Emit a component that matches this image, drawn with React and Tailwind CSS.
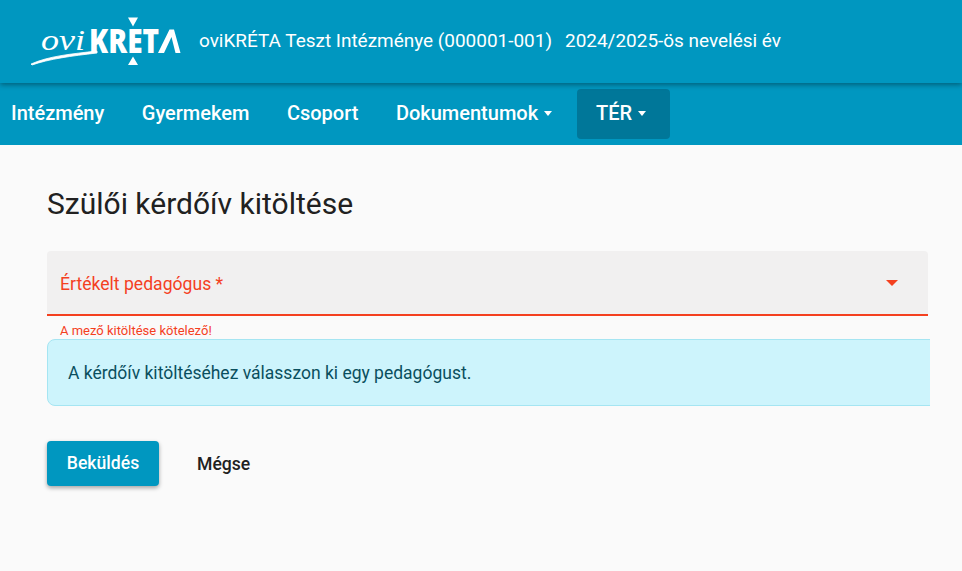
import React from 'react'

function Logo() {
  return (
    <svg width="152" height="54" viewBox="0 0 152 54" className="block">
      <text x="12" y="35" fontFamily="'Liberation Serif', serif" fontStyle="italic" fontSize="30" fill="white" textLength="44" lengthAdjust="spacingAndGlyphs">ovi</text>
      <path d="M2 49 C 20 41, 42 39, 68 36 L 68 38 C 42 41, 20 44, 3 50 Z" fill="white" stroke="white" strokeWidth="0.8" strokeLinejoin="round" />
      <text x="60" y="38" fontFamily="'Open Sans', sans-serif" fontWeight="800" fontSize="33" fill="white" textLength="70" lengthAdjust="spacingAndGlyphs">KRET</text>
      <path d="M129 38 L140.500 14.500 H145 L151.500 38 H146.500 L142.500 22 L135 38 Z" fill="white" />
      <path d="M99 2.500 H109 L104 11.500 Z M99 50 H109 L104 41.500 Z" fill="white" />
    </svg>
  )
}

function Caret() {
  return <span className="ml-[6px] inline-block w-0 h-0 border-x-[4.5px] border-x-transparent border-t-[5px] border-t-white" />
}

export default function App() {
  return (
    <div className="w-[962px] h-[571px] overflow-hidden bg-[#fafafa] font-['Roboto',sans-serif]">
      <header className="relative z-10 h-[83px] bg-[#0097c0] shadow-[0_2px_5px_rgba(0,0,0,0.35)] flex items-center pl-[29px] text-white">
        <Logo />
        <span className="ml-[18px] text-[18.97px]">oviKRÉTA Teszt Intézménye (000001-001)</span>
        <span className="ml-[13px] text-[18.97px]">2024/2025-ös nevelési év</span>
      </header>
      <nav className="h-[62px] bg-[#0097c0] flex items-center text-white text-[20px] font-medium">
        <a className="pl-[11px] mt-[-2px]">Intézmény</a>
        <a className="ml-[37.5px] mt-[-2px]">Gyermekem</a>
        <a className="ml-[37.5px] mt-[-2px]">Csoport</a>
        <a className="ml-[37.5px] mt-[-2px] flex items-center">Dokumentumok<Caret /></a>
        <a className="ml-[25px] w-[93px] h-[50px] rounded-[4px] bg-[#007799] flex items-center pl-[19px] pb-[2px]">TÉR<Caret /></a>
      </nav>
      <main className="pl-[47px] w-[930px] overflow-hidden">
        <h1 className="pt-[40px] text-[30px] leading-[37px] text-[#212121]">Szülői kérdőív kitöltése</h1>
        <div className="mt-[29px] w-[881px] h-[65px] bg-[#f1f0f0] rounded-t-[4px] border-b-2 border-[#f4401f] flex items-center justify-between pl-[13px] pr-[30px] text-[#f4401f] text-[17.6px]">
          <span className="mt-[3px]">Értékelt pedagógus *</span>
          <span className="w-0 h-0 border-x-[6px] border-x-transparent border-t-[6px] border-t-[#f4401f]" />
        </div>
        <p className="pl-[13px] mt-[7px] text-[13px] leading-[16px] text-[#f4401f]">A mező kitöltése kötelező!</p>
        <div className="w-[900px] h-[67px] bg-[#cdf4fc] border border-[#a5e5f2] rounded-[8px] flex items-center pl-[20px] text-[#0a4f5e] text-[17.5px]">
          <span className="mt-[2px]">A kérdőív kitöltéséhez válasszon ki egy pedagógust.</span>
        </div>
        <div className="mt-[35px] pb-[8px] flex items-center">
          <button className="w-[112px] h-[45px] rounded-[4px] bg-[#0097c0] text-white text-[17.6px] font-medium shadow-[0_2px_4px_rgba(0,0,0,0.35)]">Beküldés</button>
          <button className="ml-[38px] mt-[2px] text-[17.6px] font-medium text-[#212121]">Mégse</button>
        </div>
      </main>
    </div>
  )
}
